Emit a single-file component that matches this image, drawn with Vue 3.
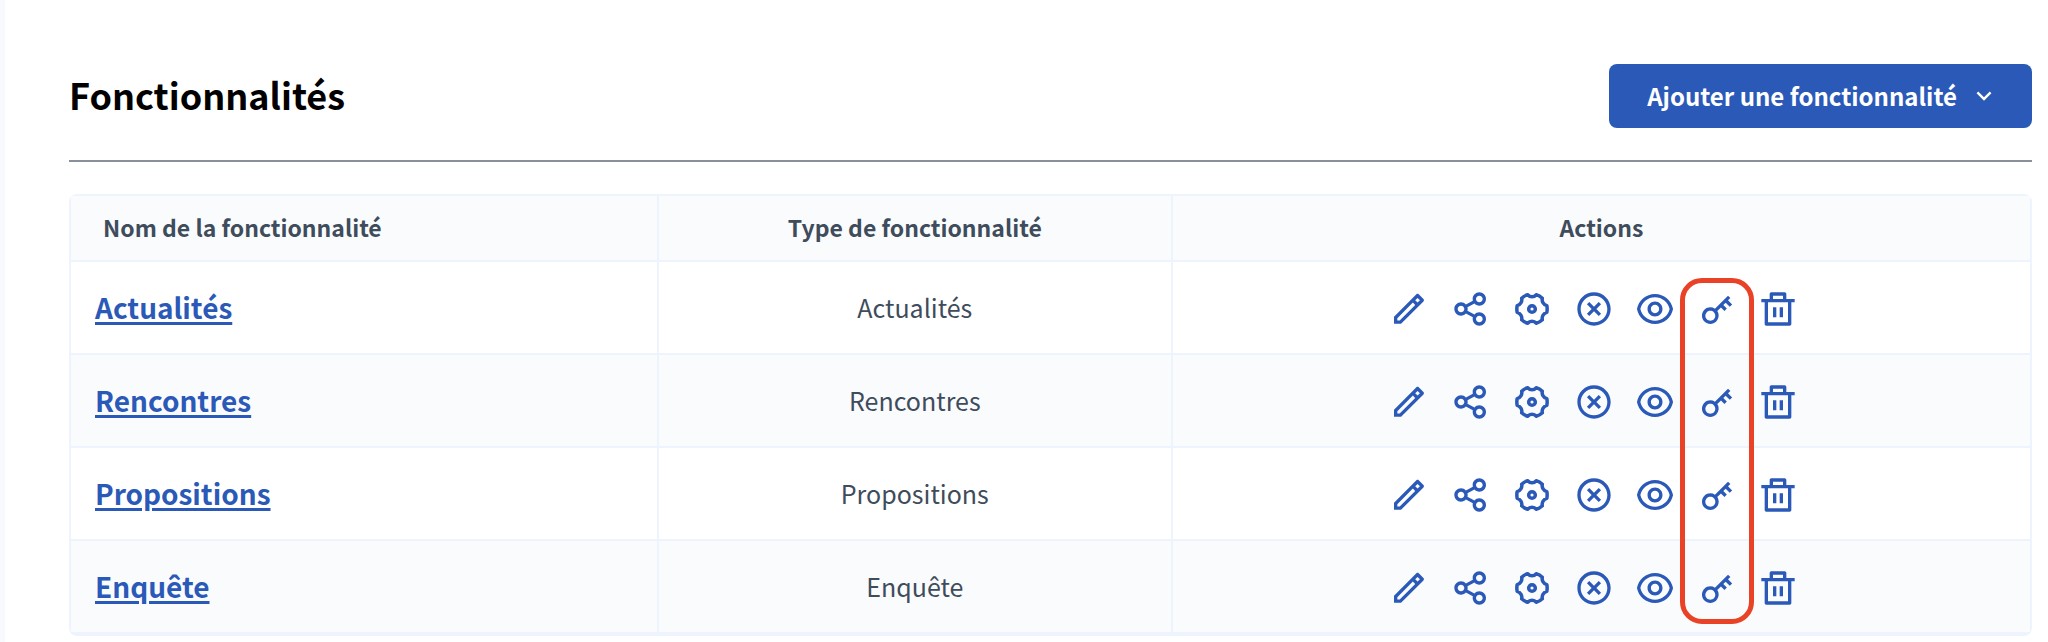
<script setup>
const ICONS = {
  pencil: 'M15.7279 9.57627L14.3137 8.16206L5 17.4758V18.89H6.41421L15.7279 9.57627ZM17.1421 8.16206L18.5563 6.74785L17.1421 5.33363L15.7279 6.74785L17.1421 8.16206ZM7.24264 20.89H3V16.6473L16.435 3.21231C16.8256 2.82179 17.4587 2.82179 17.8492 3.21231L20.6777 6.04074C21.0682 6.43126 21.0682 7.06443 20.6777 7.45495L7.24264 20.89Z',
  share: 'M13.1202 17.0228L8.92129 14.7324C8.19135 15.5125 7.15261 16 6 16C3.79086 16 2 14.2091 2 12C2 9.79086 3.79086 8 6 8C7.15255 8 8.19125 8.48746 8.92118 9.26746L13.1202 6.97713C13.0417 6.66441 13 6.33707 13 6C13 3.79086 14.7909 2 17 2C19.2091 2 21 3.79086 21 6C21 8.20914 19.2091 10 17 10C15.8474 10 14.8087 9.51251 14.0787 8.73246L9.87977 11.0228C9.9583 11.3355 10 11.6629 10 12C10 12.3371 9.95831 12.6644 9.87981 12.9771L14.0788 15.2675C14.8087 14.4875 15.8474 14 17 14C19.2091 14 21 15.7909 21 18C21 20.2091 19.2091 22 17 22C14.7909 22 13 20.2091 13 18C13 17.6629 13.0417 17.3355 13.1202 17.0228ZM6 14C7.10457 14 8 13.1046 8 12C8 10.8954 7.10457 10 6 10C4.89543 10 4 10.8954 4 12C4 13.1046 4.89543 14 6 14ZM17 8C18.1046 8 19 7.10457 19 6C19 4.89543 18.1046 4 17 4C15.8954 4 15 4.89543 15 6C15 7.10457 15.8954 8 17 8ZM17 20C18.1046 20 19 19.1046 19 18C19 16.8954 18.1046 16 17 16C15.8954 16 15 16.8954 15 18C15 19.1046 15.8954 20 17 20Z',
  close: 'M12 22C6.47715 22 2 17.5228 2 12C2 6.47715 6.47715 2 12 2C17.5228 2 22 6.47715 22 12C22 17.5228 17.5228 22 12 22ZM12 20C16.4183 20 20 16.4183 20 12C20 7.58172 16.4183 4 12 4C7.58172 4 4 7.58172 4 12C4 16.4183 7.58172 20 12 20ZM12 10.5858L14.8284 7.75736L16.2426 9.17157L13.4142 12L16.2426 14.8284L14.8284 16.2426L12 13.4142L9.17157 16.2426L7.75736 14.8284L10.5858 12L7.75736 9.17157L9.17157 7.75736L12 10.5858Z',
  eye: 'M12.0003 3C17.3924 3 21.8784 6.87976 22.8189 12C21.8784 17.1202 17.3924 21 12.0003 21C6.60812 21 2.12215 17.1202 1.18164 12C2.12215 6.87976 6.60812 3 12.0003 3ZM12.0003 19C16.2359 19 19.8603 16.052 20.7777 12C19.8603 7.94803 16.2359 5 12.0003 5C7.7646 5 4.14022 7.94803 3.22278 12C4.14022 16.052 7.7646 19 12.0003 19ZM12.0003 16.5C9.51498 16.5 7.50026 14.4853 7.50026 12C7.50026 9.51472 9.51498 7.5 12.0003 7.5C14.4855 7.5 16.5003 9.51472 16.5003 12C16.5003 14.4853 14.4855 16.5 12.0003 16.5ZM12.0003 14.5C13.381 14.5 14.5003 13.3807 14.5003 12C14.5003 10.6193 13.381 9.5 12.0003 9.5C10.6196 9.5 9.50026 10.6193 9.50026 12C9.50026 13.3807 10.6196 14.5 12.0003 14.5Z',
  key: 'M10.7577 11.8281L18.6066 3.97919L20.0208 5.3934L18.6066 6.80761L21.0815 9.28249L19.6673 10.6967L17.1924 8.22183L15.7782 9.63604L17.8995 11.7574L16.4853 13.1716L14.364 11.0503L12.1719 13.2423C13.4581 15.1837 13.246 17.8251 11.5355 19.5355C9.58291 21.4882 6.41709 21.4882 4.46447 19.5355C2.51184 17.5829 2.51184 14.4171 4.46447 12.4645C6.17493 10.754 8.81633 10.5419 10.7577 11.8281ZM10.1213 18.1213C11.2929 16.9497 11.2929 15.0503 10.1213 13.8787C8.94975 12.7071 7.05025 12.7071 5.87868 13.8787C4.70711 15.0503 4.70711 16.9497 5.87868 18.1213C7.05025 19.2929 8.94975 19.2929 10.1213 18.1213Z',
  trash: 'M17 6H22V8H20V21C20 21.5523 19.5523 22 19 22H5C4.44772 22 4 21.5523 4 21V8H2V6H7V3C7 2.44772 7.44772 2 8 2H16C16.5523 2 17 2.44772 17 3V6ZM18 8H6V20H18V8ZM9 11H11V17H9V11ZM13 11H15V17H13V11ZM9 4V6H15V4H9Z'
}

const actions = [
  { icon: 'pencil', label: 'Modifier' },
  { icon: 'share', label: 'Partager' },
  { icon: 'gear', label: 'Configurer' },
  { icon: 'close', label: 'Dépublier' },
  { icon: 'eye', label: 'Aperçu' },
  { icon: 'key', label: 'Autorisations' },
  { icon: 'trash', label: 'Supprimer' }
]

const components = ['Actualités', 'Rencontres', 'Propositions', 'Enquête']
</script>

<template>
  <main class="page">
    <header class="page-header">
      <h1>Fonctionnalités</h1>
      <button type="button" class="add">
        <span>Ajouter une fonctionnalité</span>
        <svg class="chevron" viewBox="0 0 24 24" aria-hidden="true">
          <path d="M11.9997 13.1714L16.9495 8.22168L18.3637 9.63589L11.9997 15.9999L5.63574 9.63589L7.04996 8.22168L11.9997 13.1714Z" fill="currentColor" />
        </svg>
      </button>
    </header>

    <div class="table-frame">
      <table>
        <thead>
          <tr>
            <th scope="col" class="name">Nom de la fonctionnalité</th>
            <th scope="col" class="type">Type de fonctionnalité</th>
            <th scope="col" class="actions">Actions</th>
          </tr>
        </thead>
        <tbody>
          <tr v-for="(component, row) in components" :key="component">
            <td class="name"><a href="#">{{ component }}</a></td>
            <td class="type">{{ component }}</td>
            <td class="actions">
              <ul>
                <li v-for="action in actions" :key="action.icon">
                  <a href="#" :aria-label="action.label">
                    <svg viewBox="0 0 24 24" aria-hidden="true">
                      <g v-if="action.icon === 'gear'" fill="none" stroke="currentColor" stroke-width="2.1" stroke-linejoin="round">
                        <path d="M20.9 14C19 14.5 17.7 16.6 18.2 18.5Q16.6 20 14.5 20.6C13.3 18.9 10.7 18.9 9.5 20.6Q7.4 20 5.8 18.5C6.3 16.6 5 14.5 3.1 14Q2.7 12 3.1 10C5 9.5 6.3 7.4 5.8 5.5Q7.4 4 9.5 3.4C10.7 5.1 13.3 5.1 14.5 3.4Q16.6 4 18.2 5.5C17.7 7.4 19 9.5 20.9 10Q21.3 12 20.9 14Z" />
                        <circle cx="12" cy="12" r="2" />
                      </g>
                      <path v-else :d="ICONS[action.icon]" fill="currentColor" fill-rule="evenodd" />
                    </svg>
                  </a>
                  <span v-if="row === 0 && action.icon === 'key'" class="highlight"></span>
                </li>
              </ul>
            </td>
          </tr>
        </tbody>
      </table>
    </div>
  </main>
</template>

<style>
body {
  margin: 0;
  background: #fff;
}
</style>

<style scoped>
.page {
  box-sizing: border-box;
  min-height: 100vh;
  padding: 64px 16px 0 64px;
  border-left: 5px solid #f7f9fc;
  font-family: "Noto Sans CJK SC", "Noto Sans", sans-serif;
  font-size: 25px;
  line-height: 36px;
  color: #3e4c5c;
}

.page-header {
  display: flex;
  align-items: center;
  justify-content: space-between;
  padding-bottom: 32px;
  border-bottom: 2px solid #8a8f9c;
}

h1 {
  margin: 0;
  padding-bottom: 4px;
  font-size: 36px;
  line-height: 48px;
  font-weight: 700;
  color: #000;
}

.add {
  display: flex;
  align-items: center;
  gap: 13px;
  height: 64px;
  padding: 0 34px 0 38px;
  border: 0;
  border-radius: 8px;
  background: #2b59b8;
  color: #fff;
  font: inherit;
  font-size: 24px;
  font-weight: 700;
}

.chevron {
  width: 28px;
  height: 28px;
}

.table-frame {
  margin-top: 32px;
  border: 2px solid #eef4fe;
  border-radius: 8px;
}

table {
  width: 100%;
  table-layout: fixed;
  border-collapse: separate;
  border-spacing: 0;
}

th,
td {
  box-sizing: border-box;
  padding: 0 0 2px;
  text-align: center;
  border-right: 2px solid #eef4fe;
  border-bottom: 2px solid #eef4fe;
}

th:last-child,
td:last-child {
  border-right: 0;
}

th {
  height: 66px;
  font-size: 23px;
  font-weight: 700;
}

td {
  height: 93px;
}

thead tr,
tbody tr:nth-child(even) {
  background: #fafbfd;
}

th.name {
  width: 30%;
  padding-left: 32px;
  text-align: left;
}

th.type {
  width: 26.25%;
}

td.name {
  padding-left: 24px;
  text-align: left;
  font-size: 28px;
  font-weight: 700;
}

td a {
  color: #2b59b8;
}

td.name a {
  text-decoration-thickness: 3px;
  text-underline-offset: 3px;
}

td.actions {
  padding: 3px 15px 0 0;
}

ul {
  display: flex;
  justify-content: space-between;
  width: 409px;
  margin: 0 auto;
  padding: 0;
  list-style: none;
}

li {
  position: relative;
}

li a,
li svg {
  display: block;
  width: 40px;
  height: 40px;
}

.highlight {
  position: absolute;
  top: -11px;
  left: -17px;
  box-sizing: border-box;
  width: 74px;
  height: 346px;
  border: 5px solid #ea4226;
  border-radius: 22px;
  pointer-events: none;
}
</style>
